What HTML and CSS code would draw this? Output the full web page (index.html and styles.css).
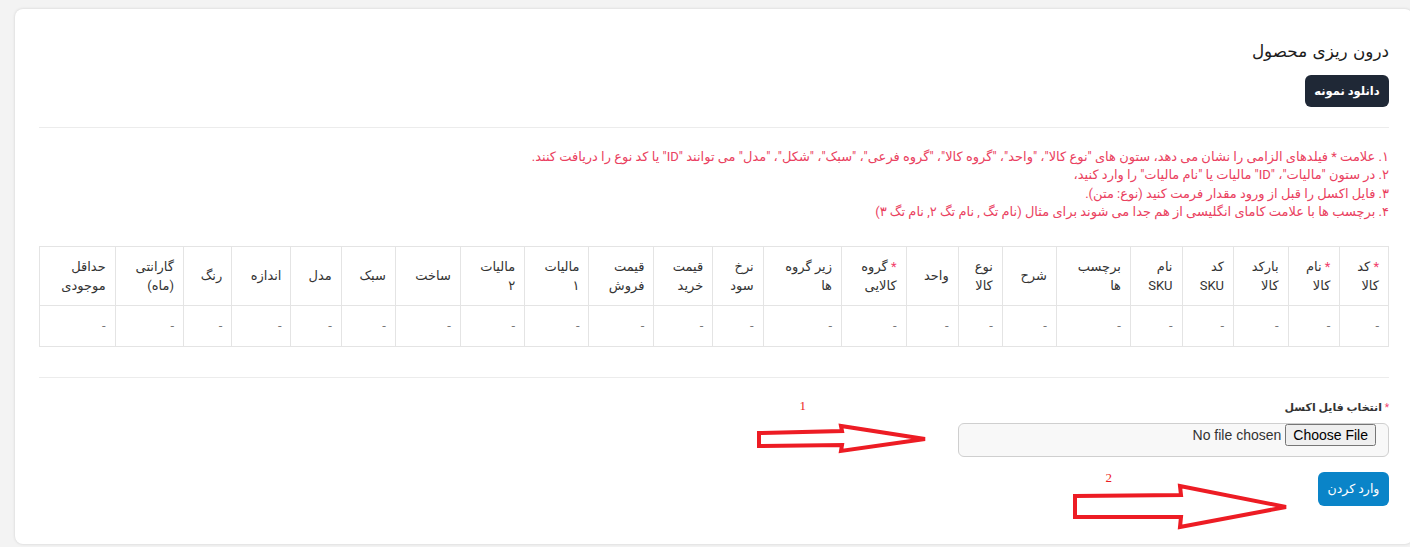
FILE: index.html
```html
<!DOCTYPE html>
<html lang="fa">
<head>
<meta charset="utf-8">
<title>درون ریزی محصول</title>
<link rel="stylesheet" href="styles.css">
</head>
<body>
<div class="card" dir="rtl">
  <div class="head">
    <h1 class="title">درون ریزی محصول</h1>
    <button class="btn btn-dark">دانلود نمونه</button>
  </div>
  <hr class="sep sep-top">
  <div class="notes">
    <div>۱. علامت * فیلدهای الزامی را نشان می دهد، ستون های "نوع کالا"، "واحد"، "گروه کالا"، "گروه فرعی"، "سبک"، "شکل"، "مدل" می توانند "ID" یا کد نوع را دریافت کنند.</div>
    <div>۲. در ستون "مالیات"، "ID" مالیات یا "نام مالیات" را وارد کنید،</div>
    <div>۳. فایل اکسل را قبل از ورود مقدار فرمت کنید (نوع: متن).</div>
    <div>۴. برچسب ها با علامت کامای انگلیسی از هم جدا می شوند برای مثال (نام تگ , نام تگ ۲, نام تگ ۳)</div>
  </div>
  <table class="grid">
    <thead>
      <tr>
        <th><span class="req">*</span> کد<br>کالا</th>
        <th><span class="req">*</span> نام<br>کالا</th>
        <th>بارکد<br>کالا</th>
        <th>کد<br>SKU</th>
        <th>نام<br>SKU</th>
        <th>برچسب<br>ها</th>
        <th>شرح</th>
        <th>نوع<br>کالا</th>
        <th>واحد</th>
        <th><span class="req">*</span> گروه<br>کالایی</th>
        <th>زیر گروه<br>ها</th>
        <th>نرخ<br>سود</th>
        <th>قیمت<br>خرید</th>
        <th>قیمت<br>فروش</th>
        <th>مالیات<br>۱</th>
        <th>مالیات<br>۲</th>
        <th>ساخت</th>
        <th>سبک</th>
        <th>مدل</th>
        <th>اندازه</th>
        <th>رنگ</th>
        <th>گارانتی<br>(ماه)</th>
        <th>حداقل<br>موجودی</th>
      </tr>
    </thead>
    <tbody>
      <tr>
        <td>-</td><td>-</td><td>-</td><td>-</td><td>-</td><td>-</td><td>-</td><td>-</td><td>-</td><td>-</td><td>-</td><td>-</td><td>-</td><td>-</td><td>-</td><td>-</td><td>-</td><td>-</td><td>-</td><td>-</td><td>-</td><td>-</td><td>-</td>
      </tr>
    </tbody>
  </table>
  <hr class="sep sep-bottom">
  <form class="upload">
    <label class="label" for="excel"><span class="req-small">*</span> انتخاب فایل اکسل</label>
    <input class="file" id="excel" type="file">
    <div class="actions">
      <button type="button" class="btn btn-primary">وارد کردن</button>
    </div>
  </form>

  <svg class="marks" width="1410" height="547" viewBox="0 0 1410 547" aria-hidden="true">
    <polygon points="759,433 842,431 841,426 925,439 841,451 842,445 759,446" />
    <polygon points="1075,496 1181,495 1180,486 1286,507 1180,527 1181,517 1075,517" />
    <text x="806" y="410">1</text>
    <text x="1112" y="482">2</text>
  </svg>
</div>
</body>
</html>
```
FILE: styles.css
```css
html, body {
  margin: 0;
  padding: 0;
}
body {
  background: #f3f3f3;
  overflow: hidden;
  width: 1410px;
  height: 547px;
  font-family: Roboto, "DejaVu Sans", sans-serif;
  color: #222;
}
.card {
  position: relative;
  box-sizing: border-box;
  margin: 9px 0 0 15px;
  width: 1398px;
  height: 535px;
  padding: 0 24px;
  background: #fff;
  border-radius: 8px;
  box-shadow: 0 0 3px rgba(0, 0, 0, 0.15);
}
.head {
  padding-top: 29px;
  text-align: right;
}
.title {
  margin: 0;
  font-family: "DejaVu Sans", sans-serif;
  font-size: 16.8px;
  line-height: 27px;
  font-weight: normal;
  color: #1c1c1c;
}
.btn {
  display: inline-block;
  border: 0;
  border-radius: 6px;
  color: #fff;
  font-family: inherit;
  cursor: pointer;
  vertical-align: top;
}
.btn-dark {
  margin-top: 10px;
  height: 32px;
  width: 84px;
  padding: 0;
  background: #1f2836;
  font-size: 11.5px;
  font-weight: bold;
}
.sep {
  border: 0;
  border-top: 1px solid #ececec;
  margin: 0;
}
.sep-top {
  margin-top: 20px;
}
.notes {
  margin-top: 20px;
  color: #ea4160;
  font-size: 13px;
  line-height: 18.4px;
}
.grid {
  margin-top: 24px;
  width: 100%;
  border-collapse: collapse;
  font-size: 13px;
  color: #333;
}
.grid th,
.grid td {
  border: 1px solid #e4e4e4;
  padding: 9px 9px;
  text-align: right;
  vertical-align: middle;
  font-weight: normal;
  line-height: 19.5px;
}
.grid th {
  padding: 10px 9px 9px;
}
.grid td {
  color: #777;
  height: 22px;
}
.req {
  color: #f1416c;
}
.sep-bottom {
  margin-top: 30px;
}
.upload {
  padding-top: 21px;
  display: flex;
  flex-direction: column;
}
.label {
  display: block;
  font-size: 11px;
  font-weight: bold;
  color: #333;
  line-height: 18px;
}
.req-small {
  color: #f1416c;
  font-size: 10px;
  vertical-align: top;
  font-weight: normal;
}
.file {
  align-self: flex-start;
  margin-top: 6px;
  box-sizing: border-box;
  width: 431px;
  height: 34px;
  padding: 0 12px;
  border: 1px solid #cfcfcf;
  border-radius: 6px;
  background: #f8f8f8;
  font-family: "Liberation Sans", Arial, sans-serif;
  font-size: 14px;
  color: #333;
}
.actions {
  margin-top: 15px;
}
.btn-primary {
  height: 34px;
  width: 71px;
  padding: 0;
  background: #0a84c8;
  font-size: 12.5px;
}
.marks {
  position: absolute;
  left: -15px;
  top: -9px;
  pointer-events: none;
}
.marks polygon {
  fill: none;
  stroke: #ed1c24;
  stroke-width: 4;
  stroke-linejoin: miter;
}
.marks text {
  fill: #ed1c24;
  font-family: "Liberation Serif", serif;
  font-size: 13px;
}
```
